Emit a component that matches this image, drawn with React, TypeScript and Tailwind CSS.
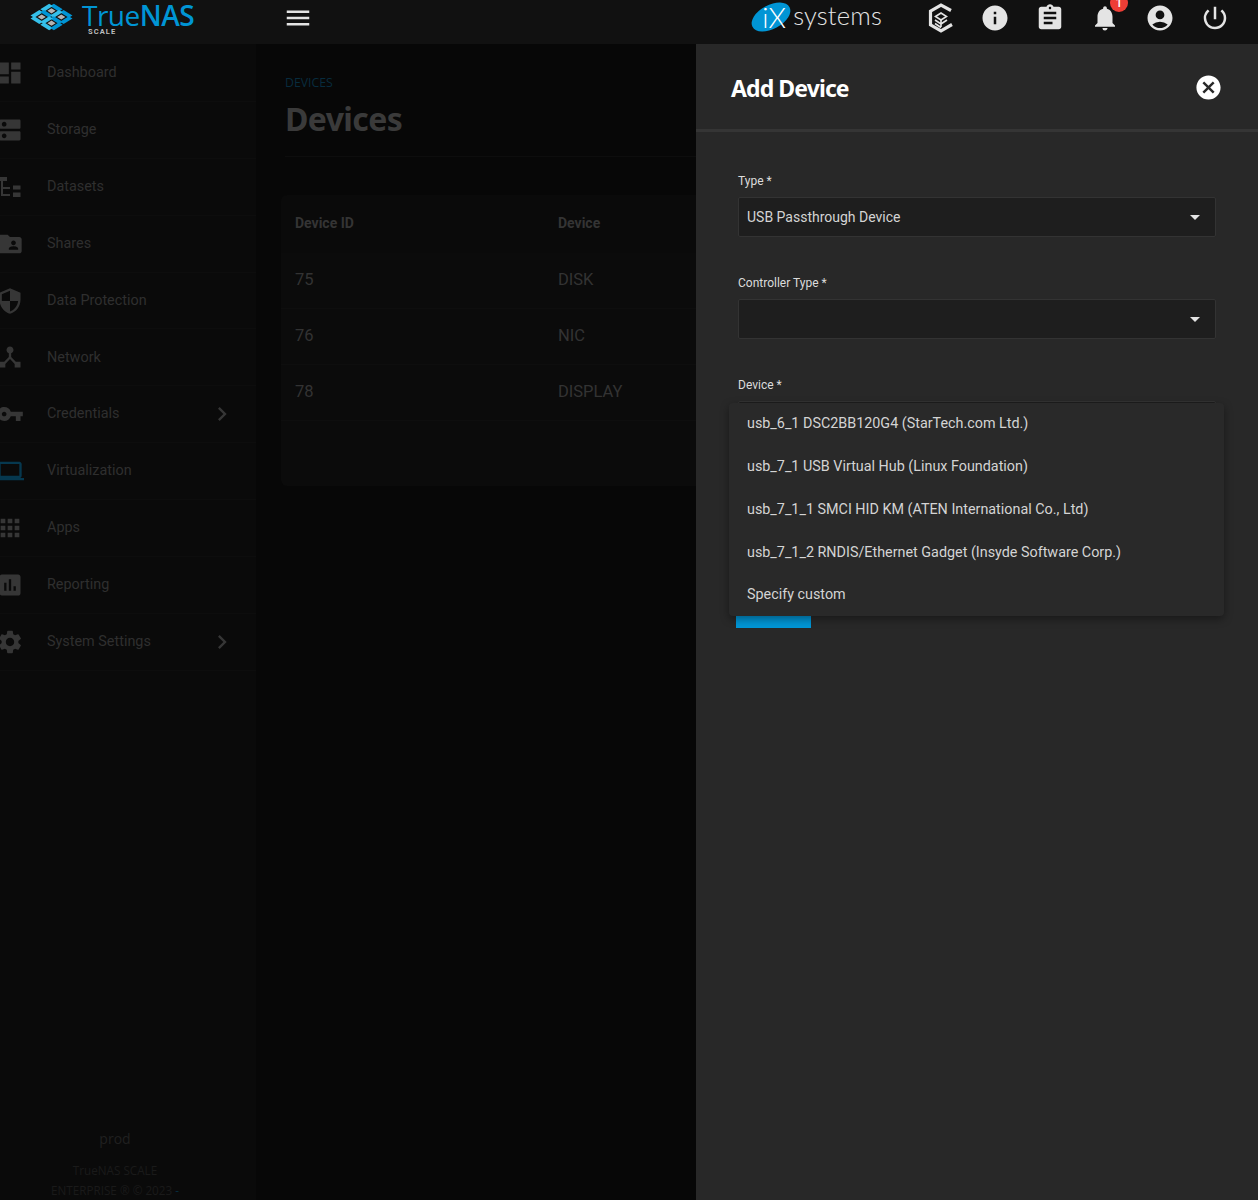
import {
  MdAccountCircle,
  MdApps,
  MdArrowDropDown,
  MdAssessment,
  MdAssignment,
  MdCancel,
  MdChevronRight,
  MdDashboard,
  MdDeviceHub,
  MdDns,
  MdFolderShared,
  MdInfo,
  MdMenu,
  MdNotifications,
  MdOutlineLaptop,
  MdPowerSettingsNew,
  MdSecurity,
  MdSettings,
  MdVpnKey,
} from "react-icons/md";
import type { ComponentType } from "react";

type IconProps = { className?: string };

function DatasetsIcon({ className }: IconProps) {
  return (
    <svg viewBox="0 0 28 28" className={className} fill="currentColor">
      <rect x="4" y="4" width="7" height="4" />
      <rect x="5" y="8" width="2" height="15" />
      <rect x="5" y="14" width="9" height="2" />
      <rect x="5" y="21" width="9" height="2" />
      <rect x="17" y="12.5" width="7.5" height="4" />
      <rect x="17" y="19.5" width="7.5" height="4.5" />
    </svg>
  );
}

const navItems: { label: string; icon: ComponentType<IconProps>; arrow?: boolean; tone?: string }[] = [
  { label: "Dashboard", icon: MdDashboard },
  { label: "Storage", icon: MdDns },
  { label: "Datasets", icon: DatasetsIcon },
  { label: "Shares", icon: MdFolderShared },
  { label: "Data Protection", icon: MdSecurity },
  { label: "Network", icon: MdDeviceHub },
  { label: "Credentials", icon: MdVpnKey, arrow: true },
  { label: "Virtualization", icon: MdOutlineLaptop, tone: "text-[#06384f]" },
  { label: "Apps", icon: MdApps },
  { label: "Reporting", icon: MdAssessment },
  { label: "System Settings", icon: MdSettings, arrow: true },
];

const rows = [
  { id: "75", device: "DISK" },
  { id: "76", device: "NIC" },
  { id: "78", device: "DISPLAY" },
];

const options = [
  "usb_6_1 DSC2BB120G4 (StarTech.com Ltd.)",
  "usb_7_1 USB Virtual Hub (Linux Foundation)",
  "usb_7_1_1 SMCI HID KM (ATEN International Co., Ltd)",
  "usb_7_1_2 RNDIS/Ethernet Gadget (Insyde Software Corp.)",
  "Specify custom",
];

function TrueNasMark() {
  // isometric grid: u,v map to the rhombus, 12 bars around 4 grey holes
  const pt = (u: number, v: number) => `${21.5 + (u - v) * 4.9},${14 + (u + v) * 3.1}`;
  const bars: { d: string; c: string }[] = [];
  for (const fixed of [-2, 0, 2]) {
    for (const [a, b] of [
      [-1.9, -0.1],
      [0.1, 1.9],
    ]) {
      bars.push({
        d: [pt(a, fixed - 0.38), pt(b, fixed - 0.38), pt(b, fixed + 0.38), pt(a, fixed + 0.38)].join(" "),
        c: fixed === 2 ? "#35c0ea" : "#0095d5",
      });
      bars.push({
        d: [pt(fixed - 0.38, a), pt(fixed - 0.38, b), pt(fixed + 0.38, b), pt(fixed + 0.38, a)].join(" "),
        c: fixed === 2 ? "#0095d5" : "#35c0ea",
      });
    }
  }
  const holes = [
    [-1, -1],
    [1, -1],
    [-1, 1],
    [1, 1],
  ];
  return (
    <svg viewBox="0 0 43 28" className="h-[28px] w-[43px]">
      {bars.map((b) => (
        <polygon key={b.d} points={b.d} fill={b.c} />
      ))}
      {holes.map(([u, v]) => (
        <polygon
          key={`${u}${v}`}
          points={[pt(u - 0.42, v - 0.42), pt(u + 0.42, v - 0.42), pt(u + 0.42, v + 0.42), pt(u - 0.42, v + 0.42)].join(" ")}
          fill="#b4b4b4"
        />
      ))}
    </svg>
  );
}

function TrueCommandIcon() {
  return (
    <svg viewBox="0 0 26 30" className="mr-[1px] h-[30px] w-[26px]" fill="none" stroke="#e4e4e4">
      <path d="M23 7.5 13 2.2 2.5 8.2v13.6L13 27.8 24 21.5" strokeWidth="3.2" />
      <path d="M7.5 13.5 13 10l5.5 3.5L13 17z" strokeWidth="1.6" />
      <path d="M7 17l6 4 6-4M7 20.5l6 4M13 17v7" strokeWidth="1.6" />
    </svg>
  );
}

function SelectBox({ value }: { value?: string }) {
  return (
    <div className="flex h-[40px] items-center justify-between rounded-[2px] border border-[#333333] bg-[#1e1e1e] px-[8px] text-[14px] text-[#d4d4d4]">
      <span>{value}</span>
      <MdArrowDropDown className="h-[24px] w-[24px] text-[#e4e4e4]" />
    </div>
  );
}

function Field({ label, value }: { label: string; value?: string }) {
  return (
    <div className="mb-[36px]">
      <div className="mb-[6px] h-[20px] text-[12px] leading-[20px] text-[#dcdcdc]">{label} *</div>
      <SelectBox value={value} />
    </div>
  );
}

export default function App() {
  return (
    <div className="flex h-[1200px] flex-col overflow-hidden bg-[#070707] font-['Roboto',sans-serif]">
      <header className="flex h-[44px] shrink-0 items-start bg-[#111111]">
        <div className="flex w-[256px] items-start pl-[30px] pt-[3px]">
          <TrueNasMark />
          <div className="relative ml-[9px] h-[38px] w-[120px]">
            <span className="absolute left-0 top-0 font-['Open_Sans',sans-serif] text-[28px] leading-[24px] tracking-[-0.5px] text-[#0095d5]">
              True<span className="font-semibold">NAS</span>
            </span>
            <span className="absolute left-[6px] top-[24.5px] text-[7.5px] font-bold leading-[7px] tracking-[1.1px] text-[#bdbdbd]">SCALE</span>
          </div>
        </div>
        <MdMenu className="ml-[27px] mt-[3px] h-[30px] w-[30px] text-[#e4e4e4]" />
        <div className="ml-auto flex items-start pt-[3px]">
          <div className="mr-[46px] flex items-center">
            <div className="relative h-[28px] w-[39px]">
              <div className="absolute left-[-1px] top-[2px] h-[24px] w-[42px] -rotate-[28deg] rounded-[50%] bg-[#0095d5]" />
              <span className="absolute left-[11px] top-[-2px] font-['Lato',sans-serif] text-[28px] font-light leading-[32px] text-white">iX</span>
            </div>
            <span className="ml-[3px] mt-[-4px] font-['Lato',sans-serif] text-[25.5px] font-light leading-[24px] tracking-[0.2px] text-[#e4e4e4]">systems</span>
          </div>
          <div className="flex items-center gap-[25px] pr-[28px]">
            <TrueCommandIcon />
            <MdInfo className="h-[30px] w-[30px] text-[#e4e4e4]" />
            <MdAssignment className="h-[30px] w-[30px] text-[#e4e4e4]" />
            <div className="relative">
              <MdNotifications className="h-[30px] w-[30px] text-[#e4e4e4]" />
              <span className="absolute right-[-8px] top-[-9px] flex h-[18px] w-[18px] items-center justify-center rounded-full bg-[#ef3e36] text-[12px] font-medium leading-none text-white">1</span>
            </div>
            <MdAccountCircle className="h-[30px] w-[30px] text-[#e4e4e4]" />
            <MdPowerSettingsNew className="h-[30px] w-[30px] text-[#e4e4e4]" />
          </div>
        </div>
      </header>

      <div className="flex min-h-0 flex-1">
        <aside className="relative flex w-[256px] shrink-0 flex-col overflow-hidden bg-[#0a0a0a]">
          <nav className="pt-[1px]">
            {navItems.map((item) => (
              <div key={item.label} className="flex h-[56.9px] items-center border-b border-[#0d0d0d]">
                <item.icon className={`ml-[-4px] h-[28px] w-[28px] shrink-0 ${item.tone ?? "text-[#363636]"}`} />
                <span className="ml-[23px] flex-1 text-[14.4px] text-[#2f2f2f]">{item.label}</span>
                {item.arrow && <MdChevronRight className="mr-[20px] h-[28px] w-[28px] text-[#363636]" />}
              </div>
            ))}
          </nav>
          <div className="mt-auto pr-[26px] text-center font-['Open_Sans',sans-serif] text-[#1a1a1a]">
            <div className="mb-[11px] text-[14px] text-[#202020]">prod</div>
            <div className="text-[11.7px] leading-[20px]">TrueNAS SCALE</div>
            <div className="text-[11.7px] leading-[20px]">
              ENTERPRISE ® © 2023 <span className="text-[#072c3e]">-</span>
            </div>
          </div>
        </aside>

        <main className="min-w-0 flex-1 overflow-hidden pl-[29px]">
          <div className="mt-[31px] h-[16px] font-['Open_Sans',sans-serif] text-[12.3px] font-medium leading-[16px] text-[#072c3e]">DEVICES</div>
          <h1 className="mt-[6px] h-[44px] font-['Noto_Sans',sans-serif] text-[32px] font-bold leading-[44px] tracking-[-0.6px] text-[#3a3a3a]">Devices</h1>
          <div className="mt-[15px] border-t border-[#0d0d0d]" />
          <section className="ml-[-4px] mt-[38px] h-[291px] overflow-hidden rounded-l-[6px] bg-[#0b0b0b]">
            <div className="grid h-[58px] grid-cols-[263px_1fr] items-center bg-[#0a0a0a] pb-[2px] pl-[14px] text-[14px] font-bold text-[#343434]">
              <span>Device ID</span>
              <span>Device</span>
            </div>
            {rows.map((row) => (
              <div key={row.id} className="grid h-[56px] grid-cols-[263px_1fr] items-center border-b border-[#0e0e0e] pl-[14px] text-[16.5px] text-[#333333]">
                <span>{row.id}</span>
                <span>{row.device}</span>
              </div>
            ))}
          </section>
        </main>

        <aside className="relative w-[562px] shrink-0 bg-[#282828]">
          <div className="flex h-[88px] items-center justify-between border-b-[3px] border-[#353535] pl-[35px] pr-[35px] pt-[4px]">
            <h2 className="font-['Noto_Sans',sans-serif] text-[23px] font-bold tracking-[-0.9px] text-white">Add Device</h2>
            <MdCancel className="mb-[3px] h-[29px] w-[29px] text-white" />
          </div>
          <form className="px-[42px] pt-[39px]">
            <Field label="Type" value="USB Passthrough Device" />
            <Field label="Controller Type" />
            <Field label="Device" />
            <button type="button" className="ml-[-2px] mt-[151px] block h-[36px] w-[75px] bg-[#0095d5]" />
          </form>
          <ul className="absolute left-[33px] top-[358.5px] w-[495px] rounded-[4px] bg-[#292929] shadow-[0_3px_8px_rgba(0,0,0,0.4)]">
            {options.map((option) => (
              <li key={option} className="flex h-[42.8px] items-center pl-[18px] text-[14.35px] text-[#d4d4d4]">
                {option}
              </li>
            ))}
          </ul>
        </aside>
      </div>
    </div>
  );
}
